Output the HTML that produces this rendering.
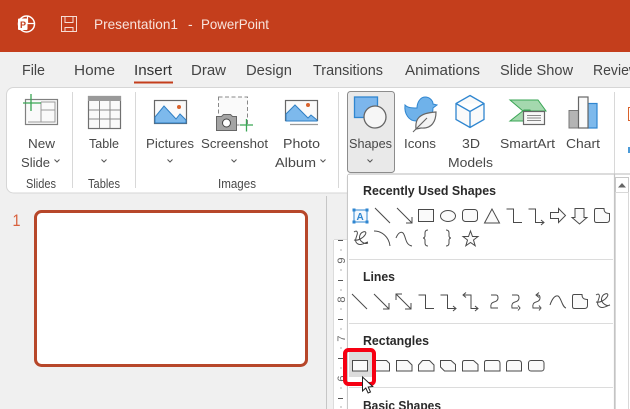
<!DOCTYPE html>
<html><head><meta charset="utf-8">
<style>
html,body{margin:0;padding:0;width:630px;height:409px;overflow:hidden;background:#f0f0f0}
svg{display:block;font-family:"Liberation Sans",sans-serif}
.t{font-size:15px;fill:#444}
.l{font-size:13px;fill:#484848}
.b{font-size:13px;font-weight:bold;fill:#2a2a2a}
.s{fill:none;stroke:#4a4a4a;stroke-width:1}
.f{fill:#fafafa;stroke:#4a4a4a;stroke-width:1}
.c{fill:none;stroke:#555;stroke-width:1}
</style></head><body>
<svg width="630" height="409" viewBox="0 0 630 409" xmlns="http://www.w3.org/2000/svg">
<rect width="630" height="409" fill="#f0f0f0"/>
<rect width="630" height="52" fill="#c43e1c"/>

<!-- title bar -->
<circle cx="26.500" cy="24" r="8" fill="none" stroke="#fff" stroke-width="1.500"/>
<path d="M27.500 16v7.500h7.500" fill="none" stroke="#fff" stroke-width="1.200"/>
<rect x="18" y="18.500" width="9.500" height="11.500" rx="1" fill="#fff"/>
<text x="20" y="28" font-size="9" font-weight="bold" fill="#c43e1c">P</text>
<path d="M61.500 16.500h15v15h-15z" fill="none" stroke="#f6dcd4" stroke-width="1"/>
<path d="M65 16.500v6h8v-6M65 31.500v-4h8v4" fill="none" stroke="#f6dcd4" stroke-width="1"/>
<text x="94" y="29" font-size="14" fill="#f8e4dd" textLength="84" lengthAdjust="spacingAndGlyphs">Presentation1</text>
<text x="188" y="29" font-size="14" fill="#f8e4dd">-</text>
<text x="201" y="29" font-size="14" fill="#f8e4dd" textLength="68" lengthAdjust="spacingAndGlyphs">PowerPoint</text>

<!-- tabs -->
<text class="t" x="22" y="75" textLength="23" lengthAdjust="spacingAndGlyphs">File</text>
<text class="t" x="74" y="75" textLength="41" lengthAdjust="spacingAndGlyphs">Home</text>
<text class="t" x="134" y="75" textLength="38" lengthAdjust="spacingAndGlyphs" style="fill:#333">Insert</text>
<rect x="134" y="81.500" width="39" height="2" fill="#c43e1c"/>
<text class="t" x="191" y="75" textLength="35" lengthAdjust="spacingAndGlyphs">Draw</text>
<text class="t" x="246" y="75" textLength="46" lengthAdjust="spacingAndGlyphs">Design</text>
<text class="t" x="313" y="75" textLength="70" lengthAdjust="spacingAndGlyphs">Transitions</text>
<text class="t" x="405" y="75" textLength="75" lengthAdjust="spacingAndGlyphs">Animations</text>
<text class="t" x="500" y="75" textLength="73" lengthAdjust="spacingAndGlyphs">Slide Show</text>
<text class="t" x="593" y="75" textLength="46" lengthAdjust="spacingAndGlyphs">Review</text>

<!-- ribbon -->
<rect x="6.500" y="87.500" width="640" height="105.500" rx="7" fill="#fff" stroke="#d6d6d6"/>
<path d="M72.500 92v96M135.500 92v96M338.500 92v96M614.500 92v96" stroke="#d8d8d8"/>

<!-- new slide -->
<rect x="25.500" y="99.500" width="32" height="25" fill="#fafafa" stroke="#808080" stroke-width="1.200"/>
<path d="M28 122h27V102H41M41 110h14M41 102v20" fill="none" stroke="#999" stroke-width="1"/>
<path d="M31 94v17M23 103h18" stroke="#3aa655" stroke-width="1.300"/>
<text class="l" x="28" y="148" textLength="27" lengthAdjust="spacingAndGlyphs">New</text>
<text class="l" x="21" y="167" textLength="29" lengthAdjust="spacingAndGlyphs">Slide</text>
<path class="c" d="M54.500 159.500l2.500 2.500 2.500-2.500"/>
<text class="l" x="26" y="188" textLength="30" lengthAdjust="spacingAndGlyphs">Slides</text>

<!-- table -->
<rect x="88.500" y="96.500" width="32" height="32" fill="#fafafa" stroke="#707070" stroke-width="1.200"/>
<rect x="88" y="96" width="33" height="5" fill="#999"/>
<path d="M99.500 101v27M110 101v27M89 110h31M89 119h31" stroke="#8a8a8a" stroke-width="1"/>
<text class="l" x="89" y="148" textLength="30" lengthAdjust="spacingAndGlyphs">Table</text>
<path class="c" d="M101.500 159.500l2.500 2.500 2.500-2.500"/>
<text class="l" x="88" y="188" textLength="32" lengthAdjust="spacingAndGlyphs">Tables</text>

<!-- pictures -->
<rect x="154.500" y="100.500" width="32" height="23" fill="#fafafa" stroke="#666" stroke-width="1.200"/>
<path d="M155 123v-6l9-11 12 13 4-5 6 6v3z" fill="#7db9ec" stroke="#2f7fc4" stroke-width="1"/>
<circle cx="179" cy="107" r="2" fill="#d9622b"/>
<text class="l" x="146" y="148" textLength="48" lengthAdjust="spacingAndGlyphs">Pictures</text>
<path class="c" d="M167.500 159.500l2.500 2.500 2.500-2.500"/>

<!-- screenshot -->
<rect x="218.500" y="97" width="29" height="28" fill="#fafafa" stroke="#888" stroke-width="1" stroke-dasharray="4 2.500"/>
<path d="M216.500 116.500h5l2-2h7l2 2h4v14h-20z" fill="#a4a4a4" stroke="#666"/>
<circle cx="226.500" cy="123" r="4" fill="#fff" stroke="#444"/>
<path d="M246.500 119v12.500M240 125h13" stroke="#3aa655" stroke-width="1.300"/>
<text class="l" x="201" y="148" textLength="67" lengthAdjust="spacingAndGlyphs">Screenshot</text>
<path class="c" d="M231.500 159.500l2.500 2.500 2.500-2.500"/>
<text class="l" x="218" y="188" textLength="38" lengthAdjust="spacingAndGlyphs">Images</text>

<!-- album -->
<path d="M290 124.500h28" stroke="#999" stroke-width="1.200"/>
<rect x="285.500" y="100.500" width="32" height="20" fill="#fafafa" stroke="#666" stroke-width="1.200"/>
<path d="M286 116v-2l9-9 13 13 3-3 6 5v1H286z" fill="#7db9ec" stroke="#2f7fc4"/>
<circle cx="308" cy="105" r="2" fill="#d9622b"/>
<text class="l" x="283" y="148" textLength="37" lengthAdjust="spacingAndGlyphs">Photo</text>
<text class="l" x="275" y="167" textLength="41" lengthAdjust="spacingAndGlyphs">Album</text>
<path class="c" d="M320.500 159.500l2.500 2.500 2.500-2.500"/>

<!-- shapes button -->
<rect x="347.500" y="91.500" width="47" height="81" rx="3" fill="#e9e9e9" stroke="#8c8c8c"/>
<rect x="354.500" y="97" width="23" height="20.500" fill="#7cb6ec" stroke="#2f86d0" stroke-width="1.300"/>
<circle cx="375" cy="117" r="11" fill="#f6f6f6" stroke="#666" stroke-width="1.300"/>
<text class="l" x="349" y="148" textLength="43" lengthAdjust="spacingAndGlyphs">Shapes</text>
<path class="c" d="M367.500 159.500l2.500 2.500 2.500-2.500"/>

<!-- icons -->
<path d="M405 105c3 3 7 3 12 3 0-5 3-11 8-11s8 4 8 7l4 1-4 3c0 8-5 13-9 13h-8c-7 0-12-7-11-16z" fill="#6fb2ea" stroke="#2f86d0"/>
<path d="M416 129c-1-9 2-16 20-17 0 9-4 17-15 16z" fill="#f4f4f4" stroke="#666" stroke-width="1.200"/>
<path d="M413 132l14-14" stroke="#666" stroke-width="1.100"/>
<text class="l" x="404" y="148" textLength="32" lengthAdjust="spacingAndGlyphs">Icons</text>

<!-- 3D -->
<path d="M470 95.500l14 8v16l-14 8-14-8v-16zM456 103.500l14 8 14-8M470 111.500v16" fill="#fafafa" stroke="#2f86d0" stroke-width="1.300"/>
<text class="l" x="462" y="148" textLength="18" lengthAdjust="spacingAndGlyphs">3D</text>
<text class="l" x="448" y="167" textLength="45" lengthAdjust="spacingAndGlyphs">Models</text>

<!-- smartart -->
<path d="M510 100h28l8 11h-23zM510 121h27l-7-11h-6z" fill="#a4d8ae" stroke="#3aa655"/>
<rect x="523.500" y="111.500" width="21" height="13" fill="#f8f8f8" stroke="#666" stroke-width="1.200"/>
<path d="M527 115.500h14M527 118h14M527 120.500h14" stroke="#888"/>
<text class="l" x="500" y="148" textLength="55" lengthAdjust="spacingAndGlyphs">SmartArt</text>

<!-- chart -->
<rect x="569" y="110.500" width="9.500" height="17.500" fill="#b4b4b4" stroke="#777"/>
<rect x="588" y="103.500" width="9" height="24.500" fill="#7db9ec" stroke="#2f86d0" stroke-width="1.200"/>
<rect x="578.500" y="97" width="9.500" height="31" fill="#fafafa" stroke="#666" stroke-width="1.200"/>
<text class="l" x="566" y="148" textLength="34" lengthAdjust="spacingAndGlyphs">Chart</text>

<!-- far right -->
<path d="M630 107.500h-1.500v13h1.500" fill="none" stroke="#d9622b"/>
<rect x="628" y="147" width="2" height="6" fill="#4a9ad8"/>

<!-- left pane -->
<path d="M326.500 196v213" stroke="#c6c6c6"/>
<text x="12.500" y="226" font-size="17" fill="#d8603c" textLength="8" lengthAdjust="spacingAndGlyphs">1</text>
<rect x="35.500" y="211.500" width="271" height="154" rx="6" fill="#fff" stroke="#b7472a" stroke-width="3"/>

<!-- ruler -->
<rect x="334" y="240" width="14" height="169" fill="#fff"/>
<path d="M334 239.500h14M333.500 240v169" stroke="#dcdcdc"/>
<g stroke="#555"><path d="M338 240.500h5M338 280.500h5M338 319.500h5M338 358.500h5M338 398.500h5"/></g>
<g stroke="#b0b0b0"><path d="M340 250h2M340 270h2M340 290h2M340 309h2M340 329h2M340 348h2M340 368h2M340 388h2M340 407h2"/></g>
<g font-size="11" fill="#666">
<text transform="translate(345,260.500) rotate(-90)" text-anchor="middle">9</text>
<text transform="translate(345,299.500) rotate(-90)" text-anchor="middle">8</text>
<text transform="translate(345,338.500) rotate(-90)" text-anchor="middle">7</text>
<text transform="translate(345,378.500) rotate(-90)" text-anchor="middle">6</text>
</g>

<!-- dropdown -->
<path d="M347.500 409V177q0-3 3-3H630" fill="#fff" stroke="#c8c8c8" stroke-width="1.200"/>
<rect x="348" y="175" width="282" height="234" fill="#fff"/>
<path d="M614.500 174v235" stroke="#c4c4c4" stroke-width="1.200"/>
<rect x="615.500" y="177.500" width="13" height="15" fill="#fff" stroke="#c8c8c8"/>
<path d="M618 187.500l4-4.500 4 4.500z" fill="#666"/>
<rect x="615.500" y="192.500" width="13" height="217" fill="#fff" stroke="#d8d8d8"/>

<text class="b" x="363" y="195" textLength="133" lengthAdjust="spacingAndGlyphs">Recently Used Shapes</text>
<text class="b" x="363" y="281" textLength="32" lengthAdjust="spacingAndGlyphs">Lines</text>
<text class="b" x="363" y="345" textLength="66" lengthAdjust="spacingAndGlyphs">Rectangles</text>
<text class="b" x="363" y="410" textLength="78" lengthAdjust="spacingAndGlyphs">Basic Shapes</text>
<path d="M349 259.500h264M349 323.500h264M349 387.500h264" stroke="#dcdcdc"/>

<!-- row 1 -->
<rect x="354" y="210" width="13" height="12" fill="#f4f9fe" stroke="#2f86d0"/>
<g fill="#2f86d0"><rect x="352.500" y="208.500" width="3" height="3"/><rect x="365.500" y="208.500" width="3" height="3"/><rect x="352.500" y="220.500" width="3" height="3"/><rect x="365.500" y="220.500" width="3" height="3"/></g>
<text x="356.500" y="220" font-size="10" font-weight="bold" fill="#2f86d0">A</text>
<path class="s" d="M375 208l15 15"/>
<path class="s" d="M397 208l15 15M412 217v6h-6"/>
<rect class="f" x="418.500" y="209.500" width="15" height="12"/>
<ellipse class="f" cx="448" cy="216" rx="7.500" ry="5.500"/>
<rect class="f" x="462.500" y="209.500" width="15" height="12" rx="3"/>
<path class="f" d="M492 209l-7.500 14h15z"/>
<path class="s" d="M506.500 209h7v13.500h8.500"/>
<path class="s" d="M528.500 209h7v13.500h8M541 220l3 2.500-3 2.500"/>
<path class="f" d="M550.500 212.500h8v-4l7 7-7 7v-4h-8z"/>
<path class="f" d="M575 208.500h9v9h3l-7.500 6.500-7.500-6.500h3z"/>
<path class="f" d="M596 208.500h8c0 3 1 5 5.500 5v6q0 3-3 3h-10q-2 0-2-2v-10q0-2 1.500-2z"/>

<!-- row 2 -->
<path class="s" d="M354 232c3-2 4 0 3 3s-3 7 1 9c4 2 8-2 10-2M354 240c4 1 9-2 11-5 2-3 0-4-2-3-3 1-5 6-2 9s5 3 7 2"/>
<path class="s" d="M374 231c8 0 15 6 16 15"/>
<path class="s" d="M396 238c2-5 5-7 7-5 3 3 2 12 9 13"/>
<path class="s" d="M428 230c-2 0-3 1-3 3v3c0 1-1 2-2 2 1 0 2 1 2 2v3c0 2 1 3 3 3"/>
<path class="s" d="M446 230c2 0 3 1 3 3v3c0 1 1 2 2 2-1 0-2 1-2 2v3c0 2-1 3-3 3"/>
<path class="f" d="M470.500 231l2 5.500h5.500l-4.500 3.500 1.700 5.800-4.700-3.300-4.700 3.300 1.700-5.800-4.500-3.500h5.500z"/>

<!-- lines row -->
<path class="s" d="M352 294l15 15"/>
<path class="s" d="M374 294l15 15M389 303v6h-6"/>
<path class="s" d="M396 294l15 15M396 300v-6h6M411 303v6h-6"/>
<path class="s" d="M418.500 295h7v13.500h8.500"/>
<path class="s" d="M440.500 295h7v13.500h8M453 306l3 2.500-3 2.500"/>
<path class="s" d="M463 295h8v13.500h7M466 292.500l-3 2.500 3 2.500M475 306l3 2.500-3 2.500"/>
<path class="s" d="M491 295h5q2 0 2 3t-4 4-3 6h7"/>
<path class="s" d="M512 295h5q2 0 2 3t-4 4-3 6h6M518 305.500l2 2.500-2 2.500"/>
<path class="s" d="M536 295h2q2 0 2 3t-4 4-3 6h7M539 292.500l-3 2.500 3 2.500M539 305.500l2 2.500-2 2.500"/>
<path class="s" d="M550 305c2-6 5-10 8-9 3 1 4 11 8 12"/>
<path class="f" d="M574 294.500h8c0 3 1 5 5.500 5v6q0 3-3 3h-10q-2 0-2-2v-10q0-2 1.500-2z"/>
<path class="s" d="M596 295c3-2 4 0 3 3s-3 7 1 9c4 2 8-2 10-2M596 302c4 1 9-2 11-5 2-3 0-4-2-3-3 1-5 6-2 9s5 3 7 2"/>

<!-- rectangles row -->
<rect x="349" y="352" width="23" height="25" fill="#dcdcdc"/>
<rect class="f" x="352.500" y="360.500" width="15" height="10.500"/>
<path class="f" d="M375.500 360.500h11l3 3v7.500h-14z"/>
<path class="f" d="M396.500 360.500h11l4.500 4.500v6h-15.500z"/>
<path class="f" d="M422.500 360.500h7l4.500 4.500v6h-15.500v-6z"/>
<path class="f" d="M440.500 360.500h10.500l4.500 4v6.500h-11l-4-4z"/>
<path class="f" d="M464.500 360.500h9l4.500 4v6.500h-15.500v-8.500q0-2 2-2z"/>
<path class="f" d="M486.500 360.500h11q2.500 0 2.500 3v7.500h-15.500v-8.500q0-2 2-2z"/>
<path class="f" d="M506.500 371v-7.500q0-3 3-3h9q3 0 3 3v7.500z"/>
<rect class="f" x="528.500" y="360.500" width="15.500" height="10.500" rx="2.500"/>

<!-- highlight box -->
<rect x="345" y="350" width="29" height="34" rx="3.500" fill="none" stroke="#f60012" stroke-width="4"/>

<!-- cursor -->
<path d="M362.500 377v14l3.300-3 2.300 5 2.400-1-2.300-5 4.500-.5z" fill="#fff" stroke="#222" stroke-width="1"/>
</svg>
</body></html>
